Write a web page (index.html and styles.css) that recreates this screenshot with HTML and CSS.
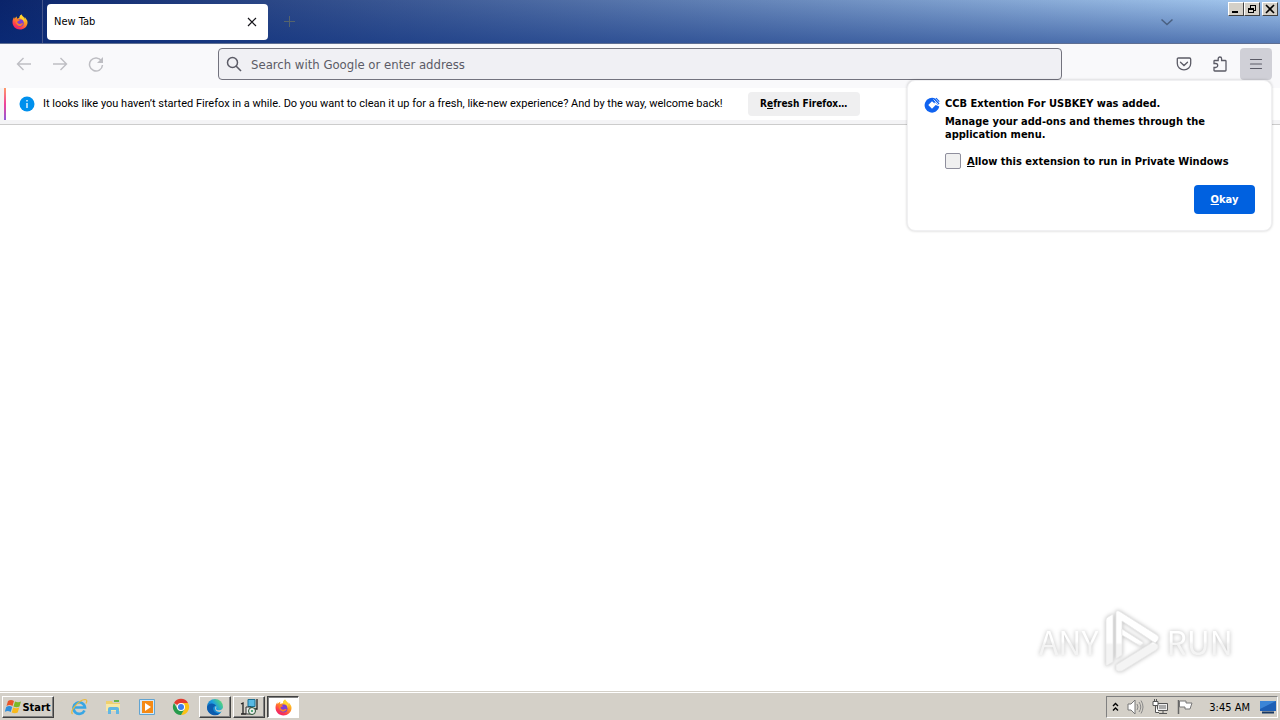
FILE: index.html
```html
<!DOCTYPE html>
<html lang="en">
<head>
<meta charset="utf-8">
<title>New Tab</title>
<link rel="stylesheet" href="styles.css">
</head>
<body>
<svg class="defs" width="0" height="0" aria-hidden="true">
  <defs>
    <linearGradient id="fire" x1="0.8" y1="0" x2="0.2" y2="1">
      <stop offset="0" stop-color="#ffe83a"/><stop offset="0.4" stop-color="#ff9a1f"/><stop offset="0.75" stop-color="#ff3b4d"/><stop offset="1" stop-color="#e8186f"/>
    </linearGradient>
    <linearGradient id="edge" x1="0" y1="0.9" x2="1" y2="0.2">
      <stop offset="0" stop-color="#0c59a4"/><stop offset="0.55" stop-color="#1b9de2"/><stop offset="1" stop-color="#5bdc6c"/>
    </linearGradient>
    <linearGradient id="mark" gradientUnits="userSpaceOnUse" x1="0" y1="0" x2="0" y2="64">
      <stop offset="0.52" stop-color="#fff"/><stop offset="0.56" stop-color="#f4f4f4"/>
    </linearGradient>
    <symbol id="firefox" viewBox="0 0 32 32">
      <path fill="url(#fire)" d="M29 11c-1-2.500-2.500-4-4-5 1 2 1.500 3.500 1.500 4.500C24.500 6 21 4.500 19 1c-3 1.500-4 4.500-4 7-2-.1-3.500.5-5 1.500C9.500 8.500 9.500 7 10 5 7.500 6 5.500 8.500 5 9.500c-.5-.7-.5-3-.4-3.500C2 8.500 1 13 1 16.500 1 24.500 7.500 31 16 31c8 0 14-5 15-12.500.4-3-.5-6-2-7.500z"/>
      <circle cx="16" cy="18" r="7.500" fill="#7a3fd6"/>
      <path fill="#ff7b28" d="M8 11c3-1 6 0 7.500 2.500-3 0-3.500 1.500-5 2 0 2.500 2 4.500 5 4.500 3 0 4-2 6.500-1-1.500 4-5 5.500-8 5C9 23 6 17 8 11z"/>
      <path fill="#ffd52e" d="M19 1c-3 1.500-4 4.500-4 7 5 .5 9 4 9 9 2-3 1-7-1-9-2-2.500-4-4-4-7z"/>
    </symbol>
  </defs>
</svg>
<div class="screen">
  <header class="titlebar">
    <div class="view-slot"><svg width="16" height="16"><use href="#firefox"/></svg></div>
    <div class="tab">
      <span>New Tab</span>
      <button class="plain" aria-label="Close tab"><svg width="10" height="10" viewBox="0 0 10 10"><path d="M1 1l8 8M9 1L1 9" fill="none" stroke="#15141a" stroke-width="1.200"/></svg></button>
    </div>
    <button class="plain new-tab" aria-label="Open a new tab"><svg width="11" height="11" viewBox="0 0 11 11"><path d="M5.500 0v11M0 5.500h11" stroke="#56646c" stroke-width="1"/></svg></button>
    <button class="plain all-tabs" aria-label="List all tabs"><svg width="14" height="8" viewBox="0 0 14 8"><path d="M1.500 1.500L7 6.500l5.500-5" fill="none" stroke="#4a6080" stroke-width="1.500"/></svg></button>
    <div class="window-buttons">
      <button aria-label="Minimize"><svg width="10" height="10" viewBox="0 0 10 10"><path d="M1 8h6" stroke="#000" stroke-width="2"/></svg></button>
      <button aria-label="Restore"><svg width="10" height="10" viewBox="0 0 10 10" shape-rendering="crispEdges"><path d="M3.500 4V1.500h5v4.500H7M3 1.500h6M1.500 4.500h5v4h-5z" fill="none" stroke="#000"/><path d="M3 1h6v1H3zM1 4h6v2H1z"/></svg></button>
      <button class="close" aria-label="Close"><svg width="10" height="10" viewBox="0 0 10 10"><path d="M1 1l8 8M9 1L1 9" stroke="#000" stroke-width="1.600"/></svg></button>
    </div>
  </header>

  <nav class="toolbar">
    <div class="nav-left">
      <button class="plain" aria-label="Back"><svg width="16" height="16" viewBox="0 0 16 16"><path d="M15 8H1.500M7.500 2L1.500 8l6 6" fill="none" stroke="#bebec3" stroke-width="1.400"/></svg></button>
      <button class="plain" aria-label="Forward"><svg width="16" height="16" viewBox="0 0 16 16"><path d="M1 8h13.500M8.500 2l6 6-6 6" fill="none" stroke="#bebec3" stroke-width="1.400"/></svg></button>
      <button class="plain" aria-label="Reload"><svg width="16" height="16" viewBox="0 0 16 16"><path d="M13.500 5A6.500 6.500 0 1 0 14.500 9" fill="none" stroke="#bebec3" stroke-width="1.500"/><path d="M15 1v6H9z" fill="#bebec3"/></svg></button>
    </div>
    <div class="urlbar">
      <svg width="16" height="16" viewBox="0 0 16 16"><circle cx="6.500" cy="6.500" r="5" fill="none" stroke="#5b5b66" stroke-width="1.500"/><path d="M10 10l5 5" stroke="#5b5b66" stroke-width="1.600"/></svg>
      <input type="text" aria-label="Address" placeholder="Search with Google or enter address">
    </div>
    <div class="nav-right">
      <button class="plain" aria-label="Save to Pocket"><svg width="16" height="16" viewBox="0 0 16 16"><path d="M2.500 2h11q1.200 0 1.200 1.200V7.500a6.700 6.300 0 0 1-13.400 0V3.200Q1.300 2 2.500 2zM4.500 6.200L8 9.500l3.500-3.300" fill="none" stroke="#5b5b66" stroke-width="1.300" stroke-linecap="round"/></svg></button>
      <button class="plain" aria-label="Extensions"><svg width="16" height="16" viewBox="0 0 16 16"><path d="M2 7.500V5.200q0-.7.700-.7H6.200V2.700a1.700 1.700 0 0 1 3.400 0V4.500h3.700q.7 0 .7.700v9.100q0 .7-.7.700H2.700q-.7 0-.7-.7V11.500h1.700a2 2 0 0 0 0-4z" fill="none" stroke="#5b5b66" stroke-width="1.300"/></svg></button>
      <button class="plain menu" aria-label="Open application menu"><svg width="16" height="16" viewBox="0 0 16 16"><path d="M2.500 3.500h11M2.500 8h11M2.500 12.500h11" stroke="#5b5b66" stroke-width="1.200" stroke-linecap="round"/></svg></button>
    </div>
    <section class="popup" role="dialog" aria-label="Extension added">
      <svg class="ext-icon" width="16" height="16" viewBox="0 0 16 16"><path d="M11.500 1.700A7.400 7.400 0 1 0 15.300 9.500L11.700 8 8 11.700 4.300 8 8 4.300l2.500 2.200z" fill="#1063f0"/><path d="M9.500 3.500l1.500-2 4.500 5-1.500 1.500z" fill="#1063f0"/><path d="M9.500 2.500l5 5" stroke="#fff" stroke-width=".8"/><path d="M12 1.200l3.300 3.500" stroke="#1063f0" stroke-width="1.200"/></svg>
      <div class="popup-body">
        <h1>CCB Extention For USBKEY was added.</h1>
        <p>Manage your add-ons and themes through the application menu.</p>
        <label><input type="checkbox"><span><u>A</u>llow this extension to run in Private Windows</span></label>
        <button class="primary"><span><u>O</u>kay</span></button>
      </div>
    </section>
  </nav>

  <section class="notification">
    <svg width="16" height="16" viewBox="0 0 16 16"><circle cx="8" cy="8" r="7.500" fill="#0090ed"/><path d="M8 7v5M8 4v1.500" stroke="#fff" stroke-width="1.300"/></svg>
    <span class="message">It looks like you haven’t started Firefox in a while. Do you want to clean it up for a fresh, like-new experience? And by the way, welcome back!</span>
    <button><span>R<u>e</u>fresh Firefox…</span></button>
  </section>

  <main class="page">
    <div class="watermark">
      <span>ANY</span>
      <svg width="56" height="64" viewBox="0 0 56 64"><g fill="url(#mark)" stroke="#e9e9e9" stroke-width=".8"><path d="M12 3q0-2 3-1L53 26q3 2 1 5l-3 3L18 12v34l-6 4z"/><path d="M2 11q0-2 2-3l5-3v48l-7 4z"/><path d="M12 56l37-23 5 3q1 3-2 5L18 62q-4 1-6-1z"/><path d="M18 20l22 14-4 3-18-11z"/></g></svg>
      <span>RUN</span>
    </div>
  </main>

  <footer class="taskbar">
    <button class="start"><svg width="17" height="16" viewBox="0 0 17 16"><path d="M3 2q3-2 6 0L7.500 7q-3-2-6 0z" fill="#e8562a"/><path d="M10 2.500q3 1.500 6 0L14.500 7.500q-3 1.500-6 0z" fill="#7bb928"/><path d="M1.200 8q3-2 6 0L5.700 13q-3-2-6 0z" fill="#2f8fdc"/><path d="M8.200 8.500q3 1.500 6 0L12.700 13.500q-3 1.500-6 0z" fill="#f8b91c"/></svg><span>Start</span></button>
    <div class="quick">
      <button class="plain" aria-label="Internet Explorer"><svg width="18" height="18" viewBox="0 0 18 18"><path d="M14.500 12.500A5.800 5.800 0 1 1 15 9.500H5" fill="none" stroke="#38a6e4" stroke-width="2.600"/><path d="M2.500 16C-1 13 9 2 15 1.500c2.500 0 2 2 1 4" fill="none" stroke="#e9b93c" stroke-width="1.200"/></svg></button>
      <button class="plain" aria-label="Explorer"><svg width="18" height="18" viewBox="0 0 18 18"><path d="M2 3h6l1 2h7v8H2z" fill="#efd06d"/><path d="M2 6h14v7H2z" fill="#f8e8a5"/><path d="M4 16v-5q0-2 2-2h7q2 0 2 2v5h-3v-4H7v4z" fill="#62b7e3"/><path d="M10 3h5" stroke="#68b54a" stroke-width="2"/></svg></button>
      <button class="plain" aria-label="Media Player"><svg width="18" height="18" viewBox="0 0 18 18"><path d="M1.500 1.500h15v15h-15z" fill="#d4e9f8" stroke="#62a4d1"/><path d="M4 3h11v12H4z" fill="#f58a15"/><path d="M7 5v8l6-4z" fill="#fff"/></svg></button>
      <button class="plain" aria-label="Chrome"><svg width="18" height="18" viewBox="0 0 18 18"><path d="M9 9L2 5a8 8 0 0 1 14 0z" fill="#e33b2e"/><path d="M9 9V5h7a8 8 0 0 1-7 12l3.500-6z" fill="#fbc116"/><path d="M9 9l3.500 2L9 17A8 8 0 0 1 2 5l3.500 6z" fill="#269b4b"/><circle cx="9" cy="9" r="4" fill="#fff"/><circle cx="9" cy="9" r="3" fill="#3b7ded"/></svg></button>
    </div>
    <div class="tasks">
      <button aria-label="Edge"><svg width="18" height="18" viewBox="0 0 18 18"><circle cx="9" cy="9" r="8" fill="url(#edge)"/><path d="M1 9c2-5 8-4 9-1-4 0-4 6 1 7 2 .5 3 0 4-.5A8 8 0 0 1 1 9z" fill="#0c5cae"/><path d="M10 8c1 2-1 3 1 4 2 .8 5 0 6-2v3l-3 1c-4 0-6-3-4-6z" fill="#d4d0c8"/></svg></button>
      <button aria-label="Installer"><svg width="18" height="18" viewBox="0 0 18 18"><path d="M8 1.500h7v7H8z" fill="#57b9e4" stroke="#1b6f91"/><path d="M17 1v10h-3M1 6l2-1v11M1 16h5" fill="none" stroke="#222" stroke-width="1.300"/><path d="M6 9h5v7H6z" fill="#eee" stroke="#333"/><circle cx="12" cy="13" r="3.500" fill="#e8eee8" stroke="#264c32"/><circle cx="12" cy="13" r="1" fill="#279456"/></svg></button>
      <button class="active" aria-label="Firefox"><svg width="17" height="17"><use href="#firefox"/></svg></button>
    </div>
    <div class="tray">
      <svg width="7" height="10" viewBox="0 0 7 10"><path d="M1 4l2.500-2.500L6 4M1 8.500L3.500 6 6 8.500" fill="none" stroke="#000" stroke-width="1.400"/></svg>
      <svg width="17" height="16" viewBox="0 0 17 16"><path d="M1 5h3l4-4v14l-4-4H1z" fill="#fff" stroke="#777"/><path d="M10 5q2 3 0 6M12 3q3.500 5 0 10M14 1.500q4 6.500 0 13" fill="none" stroke="#888"/></svg>
      <svg width="17" height="16" viewBox="0 0 17 16"><path d="M5.500 4.500h10v7h-10zM7 14.500h8M11 12v3" fill="#eee" stroke="#555"/><path d="M7 6h7v4H7z" fill="#aaa"/><path d="M1 2.500h5v4H1zM2.500 0v2M4.500 0v2M3.500 6.500v7H7" fill="#fff" stroke="#555"/></svg>
      <svg width="16" height="16" viewBox="0 0 16 16"><path d="M1.500 1v14" stroke="#666" stroke-width="1.500"/><path d="M2.500 2H9v2h6l-2 6H8V8H2.500z" fill="#fff" stroke="#777"/></svg>
      <time>3:45 AM</time>
      <svg class="desktop" width="16" height="14" viewBox="0 0 16 14"><path d="M0 1h16v10H0z" fill="#1e5fb5"/><path d="M0 1h16L0 9z" fill="#3c85d6"/><path d="M2 12.500h12" stroke="#173863" stroke-width="2"/></svg>
    </div>
  </footer>
</div>
</body>
</html>
```

FILE: styles.css
```css
* { box-sizing: border-box; }
body {
  margin: 0;
  font: 11px/13px "DejaVu Sans Condensed", Tahoma, sans-serif;
  color: #000;
}
svg { display: block; flex: none; }
.defs { position: absolute; }
button, input { font: inherit; color: inherit; margin: 0; }
button { padding: 0; display: flex; align-items: center; justify-content: center; }
.plain { border: 0; background: none; }
.screen { min-height: 100vh; display: flex; flex-direction: column; background: #fff; }

.titlebar {
  height: 44px;
  display: flex;
  align-items: center;
  border-bottom: 1px solid #5f6f92;
  background: linear-gradient(rgba(10, 36, 106, 0), rgba(10, 46, 126, 0.5)), linear-gradient(90deg, #0a246a, #a6caf0);
}
.view-slot {
  width: 43px;
  height: 100%;
  padding-right: 2px;
  display: flex;
  align-items: center;
  justify-content: center;
  border-right: 1px solid #45568b;
}
.tab {
  width: 221px;
  height: 36px;
  margin-left: 4px;
  padding: 0 11px 0 7px;
  display: flex;
  align-items: center;
  justify-content: space-between;
  border-radius: 4px;
  background: #fff;
}
.new-tab { margin-left: 16px; }
.all-tabs { margin-left: auto; }
.window-buttons { align-self: flex-start; display: flex; margin: 2px 2px 0 54px; }
.window-buttons button {
  width: 16px;
  height: 14px;
  background: #d4d0c8;
  border: 1px solid;
  border-color: #fff #404040 #404040 #fff;
}
.window-buttons .close { margin-left: 2px; }

.toolbar {
  position: relative;
  height: 44px;
  padding: 0 8px 4px;
  display: flex;
  align-items: center;
  justify-content: space-between;
  background: #f9f9fb;
}
.nav-left, .nav-right { display: flex; gap: 4px; }
.nav-left { width: 210px; }
.nav-right { width: 210px; justify-content: flex-end; }
.nav-left button, .nav-right button { width: 32px; height: 32px; border-radius: 4px; }
.nav-right .menu { background: #d0d0d7; }
.urlbar {
  flex: 1;
  height: 32px;
  padding: 0 7px;
  display: flex;
  align-items: center;
  gap: 9px;
  border: 1px solid #73737e;
  border-radius: 4px;
  background: #f0f0f4;
}
.urlbar input { flex: 1; min-width: 0; padding: 0; border: 0; background: none; outline: 0; font-size: 13px; }
.urlbar input::placeholder { color: #5b5b66; opacity: 1; }

.popup {
  position: absolute;
  z-index: 1;
  top: 36px;
  right: 8px;
  width: 365px;
  padding: 16px;
  display: flex;
  gap: 5px;
  border: 1px solid #f0f0f2;
  border-radius: 8px;
  background: #fff;
  box-shadow: 0 0 3px rgba(0, 0, 0, 0.2);
  font-weight: bold;
}
.popup-body { flex: 1; display: flex; flex-direction: column; }
.popup h1 { margin: 0 0 5px; font-size: 11px; }
.popup p { margin: 0 0 12px; }
.popup label { display: flex; align-items: center; gap: 6px; white-space: nowrap; }
.popup label input { appearance: none; width: 16px; height: 16px; border: 1px solid #8f8f9d; border-radius: 2px; background: #f0f0f0; }
.primary {
  align-self: flex-end;
  width: 61px;
  height: 29px;
  margin-top: 16px;
  border: 0;
  border-radius: 4px;
  background: #0061e0;
  color: #fff;
}

.notification {
  min-height: 37px;
  padding: 0 19px 5px;
  display: flex;
  align-items: center;
  border-bottom: 1px solid #ccc;
  background: linear-gradient(#ff9a68, #f0439a 50%, #9059d8) 4px 0 / 2px 32px no-repeat, linear-gradient(#fff, #fff) 6px 0 / 100% 32px no-repeat, #f4f4f6;
}
.message { margin: 0 25px 0 8px; white-space: nowrap; font-family: Roboto, sans-serif; }
.notification button { width: 112px; height: 24px; border: 0; border-radius: 4px; background: #efeff0; font-size: 10px; font-weight: bold; }

.page { flex: 1; display: flex; align-items: flex-end; justify-content: flex-end; padding: 0 47px 19px 0; }
.watermark {
  display: flex;
  align-items: center;
  gap: 6px;
  font: 32px/64px "Noto Sans CJK SC", sans-serif;
  filter: drop-shadow(0 0 2px #bbb);
}
.watermark span {
  color: transparent;
  background: linear-gradient(#fff 50%, #f4f4f4 55%);
  background-clip: text;
}

.taskbar {
  height: 28px;
  display: flex;
  align-items: center;
  padding: 1px 2px 0;
  background: #d4d0c8;
  border-top: 1px solid #fff;
  box-shadow: 0 -1px #d4d0c8;
}
.start, .tasks button {
  height: 22px;
  background: #d4d0c8;
  border: 1px solid;
  border-color: #fff #404040 #404040 #fff;
  box-shadow: inset -1px -1px #808080;
}
.start { width: 52px; font-weight: bold; }
.quick { display: flex; gap: 16px; margin-left: 16px; }
.tasks { display: flex; gap: 2px; margin-left: 9px; }
.tasks button { width: 32px; }
.tasks .active { background: #fff; border-color: #404040 #fff #fff #404040; box-shadow: inset 1px 1px #808080; }
.tray {
  height: 22px;
  margin-left: auto;
  padding: 0 1px 0 5px;
  display: flex;
  align-items: center;
  gap: 8px;
  border: 1px solid;
  border-color: #808080 #fff #fff #808080;
}
.tray time { margin: 0 2px 0 8px; }
```
